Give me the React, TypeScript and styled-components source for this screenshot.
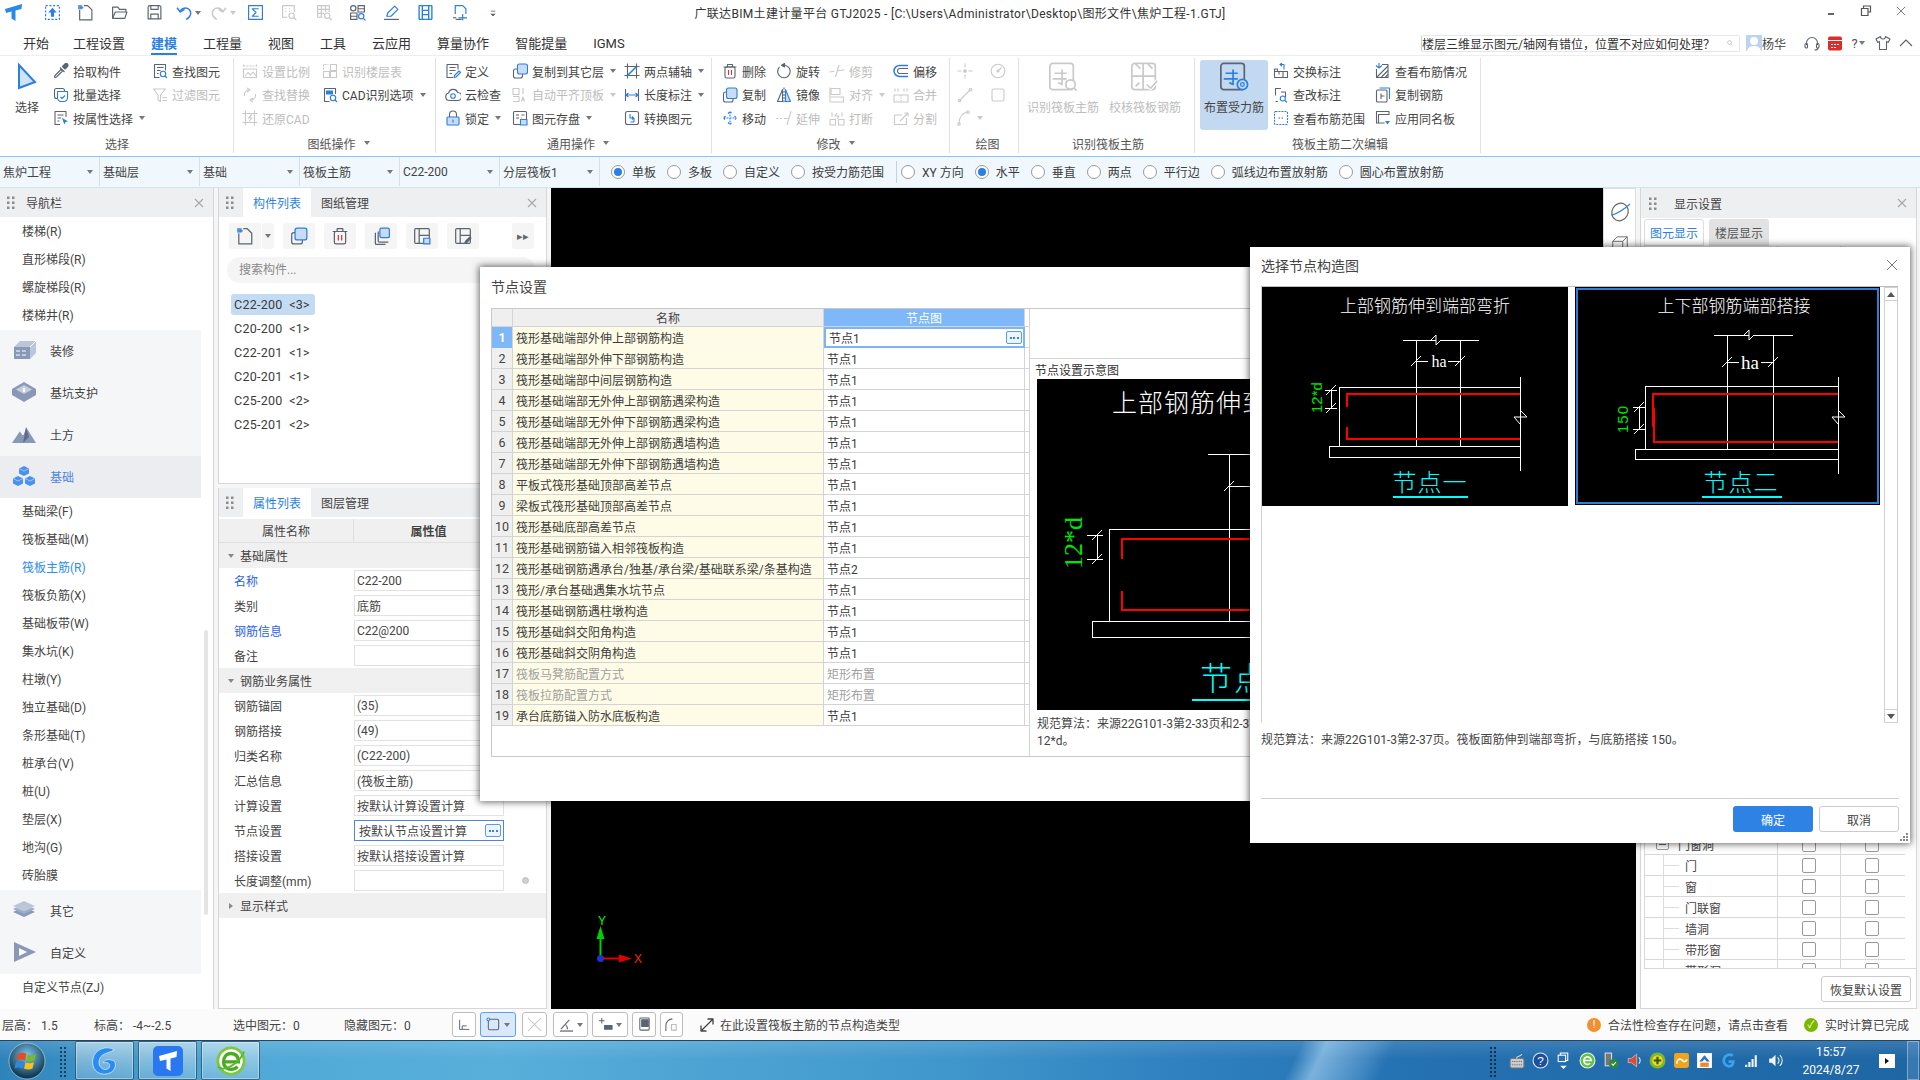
import React from "react";
import styled, { createGlobalStyle, css } from "styled-components";

const FONT = `Roboto, "Noto Sans CJK SC", "Noto Sans", sans-serif`;

const Global = createGlobalStyle`
  html, body { margin: 0; padding: 0; background: #fff; }
  body { font-family: ${FONT}; font-size: 12px; color: #3c3c3c; }
  * { box-sizing: border-box; }
  #root { width: 1920px; height: 1080px; }
`;

/* ---------- icons ---------- */
const IconBox = styled.svg<{ $dim?: boolean }>`
  flex: none;
  display: block;
  fill: none;
  stroke: currentColor;
  stroke-width: 1.1;
  stroke-linejoin: round;
  color: ${(p) => (p.$dim ? "#c9c9c9" : "#5b6470")};
  --a: ${(p) => (p.$dim ? "#c9c9c9" : "#2b7fe0")};
  --f: ${(p) => (p.$dim ? "#ececec" : "#c8dcf6")};
  --r: ${(p) => (p.$dim ? "#c9c9c9" : "#d8343a")};
`;
const A = { stroke: "var(--a)" };
const AF = { stroke: "var(--a)", fill: "var(--f)" };

const GLYPH: Record<string, React.ReactNode> = {
  pick: (<><path d="M2 14.5l-.5-.5.5-1.5L8 6.5l1.5 1.5-6 6z" /><path d="M7 4.5l4.5 4.5" /><path d="M9.5 3.5l2.5-2.5a1.4 1.4 0 012.5 2.5l-2.5 2.5z" fill="currentColor" /></>),
  batch: (<><rect x="1.5" y="1.5" width="10" height="10" rx="2" /><path {...A} fill="#fff" d="M4.5 4.5h10v6.5a3.5 3.5 0 01-3.5 3.5H8a3.5 3.5 0 01-3.5-3.5z" /><path {...A} d="M7.5 10l1.5 1.5 3-3" /></>),
  attr: (<><path d="M13 7V1.5H2v13h5" /><path d="M4.5 5h6M4.5 8h3.5M4.5 11h2" /><path fill="var(--a)" stroke="none" d="M9 8l6 3.3-2.5.7-1.2 2.5z" /></>),
  find: (<><path d="M13.5 7.5V1.5h-11v13h5" /><path d="M5 4.5h6.5M5 7.5h3.5M5 10.5h1.5" /><circle {...A} cx="11" cy="11" r="2.7" /><path {...A} d="M13 13l2 2" /></>),
  filter: (<><path d="M1.5 2h12L8.5 8v6.5L6 13V8z" /><path d="M10.5 10.5h4.5M10.5 13.5h4.5" /></>),
  scale: (<><path d="M1.5 1.5v3M14.5 1.5v3M1.5 3h13" strokeDasharray="2 1" /><rect x="1.5" y="6" width="13" height="8.5" /><path d="M3 13l3-3.5 2.5 2.5L11 9l3 4" /></>),
  floor: (<><path d="M1.5 8.5h6v6h-6zM8.5 8.5h6v6h-6zM8.5 1.5h6v6h-6z" /><path d="M1.5 6.5v-5h5" strokeDasharray="2 1" /></>),
  replace: (<><path d="M2.5 9a5.5 5.5 0 014-6.2M13.5 7a5.5 5.5 0 01-4 6.2" /><path d="M5 1l3 2-3 2M11 11l-3 2 3 2" /></>),
  restore: (<><path d="M0.5 3.5h15M0.5 12.5h15M3.5 .5v15M12.5 .5v15" /><path {...A} d="M10 4.5L6.5 8H10L7 11.5" /></>),
  cad: (<><path d="M13.5 7V1.5h-11v13h5" /><rect x="4" y="3.5" width="7" height="4" fill="var(--a)" stroke="none" /><circle {...A} cx="11" cy="11" r="2.7" /><path {...A} d="M13 13l2 2" /></>),
  define: (<><path d="M13 6.5V1.5H2v13h6" /><path d="M4.5 4.5h6M4.5 7.5h6M4.5 10.5h2.5" /><path {...A} d="M9 14.8l.5-2.3 4.5-4.5 1.5 1.5-4.5 4.5z" /></>),
  cloud: (<><path d="M4.5 13.5a3.8 3.8 0 01-.8-7.5 4.7 4.7 0 019-.5 3.9 3.9 0 01-.2 8z" /><circle {...A} cx="8" cy="9" r="2.3" /></>),
  lock: (<><rect {...AF} x="2" y="7" width="12" height="8" rx="1" /><path d="M4.5 7V4.5a3.5 3.5 0 017 0V7" /><path stroke="#2b7fe0" d="M8 9.5v3" /></>),
  copyto: (<><rect x="1.5" y="6" width="9" height="9" rx="2" /><rect {...AF} x="5.5" y="1" width="10" height="10" rx="2" /></>),
  alignTop: (<><path d="M1 1.5h6v6H1zM1 9.5h6v5H1" /><path d="M11 1l0 6M9.5 14.5L11 10l1.5 4.5M10 13h2" /></>),
  disk: (<><rect x="1.5" y="1.5" width="13" height="13" rx="1" /><path d="M4 5h3M4 8h3M9.5 5h3M9.5 8h.5" /><rect {...AF} x="8.5" y="9.5" width="6.5" height="5.5" /></>),
  twoPt: (<><path d="M3.5 .5v15M12.5 .5v15M.5 3.5h15M.5 12.5h15" /><path {...A} strokeWidth="1.6" d="M3.5 12.5l9-9" /></>),
  dimen: (<><path d="M1.5 2v12M14.5 2v12" /><path {...A} d="M2 8h12M4.5 6L2 8l2.5 2M11.5 6L14 8l-2.5 2" /></>),
  convert: (<><rect x="1.5" y="1.5" width="13" height="13" rx="2" /><path {...A} d="M6 4v4H9.5M8 6.5L9.5 8 8 9.5M10 12V8M10 12H6.5" /></>),
  trash: (<><path d="M1.5 4h13M5.5 4V1.5h5V4" /><rect x="3" y="4" width="10" height="11" rx="1.5" /><path stroke="var(--r)" d="M6.5 7v5M9.5 7v5" /></>),
  rotate: (<><path d="M9 2.2a6.3 6.3 0 11-5.5 1.7" /><path d="M8.5 .5v3.5L5.5 2.2z" fill="currentColor" /></>),
  trim: (<><path d="M.5 9l5-.7M9 7.8l6.5-1M10 2L6.5 14" /></>),
  offset: (<><path {...A} strokeWidth="1.5" d="M15 2.5H6.5a5.5 5.5 0 000 11H15" /><path d="M15 5.5H7a2.5 2.5 0 000 5h8" /></>),
  copyFill: (<><rect x="1.5" y="5" width="9.5" height="10" rx="2" /><rect {...AF} x="4.5" y="1" width="10.5" height="10.5" rx="2" /></>),
  mirror: (<><path d="M6.5 2.5L1.5 14.5h5z" /><path {...A} fill="var(--f)" d="M9.5 2.5l5 12h-5z" /><path d="M8 .5v15" strokeDasharray="2 1.2" /></>),
  align: (<><path d="M2 1.5h9v6H2zM2 10h12.5v5H2" /><path d="M1 .5v15" /></>),
  merge: (<><path d="M2 1.5v3M5 1.5v3M11 1.5v3M14 1.5v3" /><rect x="1" y="8" width="14" height="7" /><path d="M8 8v7" strokeDasharray="1.5 1" /></>),
  move: (<><path {...A} d="M8 1.5v13M1.5 8h13M6 3.5l2-2 2 2M6 12.5l2 2 2-2M3.5 6l-2 2 2 2M12.5 6l2 2-2 2" strokeDasharray="2 1" /></>),
  extend: (<><path d="M.5 8.5h2M4 8.5h2M8 8.5h4M15 1L11 15" /></>),
  breakIt: (<><rect x="1" y="9.5" width="5.5" height="5.5" /><rect x="9.5" y="9.5" width="5.5" height="5.5" /><path d="M3 2.5v4M13 2.5v4M8 3l-2 3h4L8 9" /></>),
  split: (<><path d="M13.5 8v6.5h-12V5H9" /><path d="M7 11l7.5-7.5M11.5 3h3.5v3.5" /></>),
  point: (<><path d="M8 .5v4M8 11.5v4M.5 8h4M11.5 8h4" /><circle cx="8" cy="8" r="1.3" fill="currentColor" /></>),
  gauge: (<><circle cx="8" cy="8" r="6.8" /><path d="M8 8l3.5-3.5" /><circle cx="8" cy="8" r="1" fill="currentColor" /></>),
  line: (<><path d="M2.5 13.5l11-11" /><circle cx="2.5" cy="13.5" r="1.3" /><circle cx="13.5" cy="2.5" r="1.3" /></>),
  rect: (<><rect x="2" y="2" width="12" height="12" rx="1.8" /></>),
  arc: (<><path d="M2 14C2 7 5 3 11 2" /><circle cx="2" cy="14" r="1.3" /><circle cx="11" cy="2" r="1.3" /></>),
  swap: (<><path d="M1.5 8.5h13v6h-13zM1.5 8.5V6h3v2.5M6 8.5V11.5M10 8.5v6" /><path {...A} d="M11 6.5V1.5H7.5M9 0l-2 1.5L9 3" /></>),
  edit: (<><path d="M8 1.5H2.5v7M2.5 14.5H5" /><path d="M8 5h4.5v5" /><circle {...A} cx="9.8" cy="11.5" r="2.5" /><path {...A} d="M12 13.5l2 2" /></>),
  range: (<><rect {...A} x="1.5" y="1.5" width="13" height="13" rx="1" strokeDasharray="2 1" /><path d="M5.5 8h5" strokeDasharray="1.5 1.5" /></>),
  hatch: (<><path d="M1.5 6v8.5H13V1.5H7" /><path d="M2 14l11-11M6 14.5l7-7M10 14.5l3-3" /><path {...A} d="M4 0v5M1 2.5l3 2.5 3-2.5" /></>),
  copyBar: (<><rect x="1.5" y="3" width="10.5" height="12" rx="1" /><path d="M6 9h3.5M6 9V6.5M6 9v3" /><path {...A} d="M4.5 1h10v11" /></>),
  sameName: (<><path d="M1.5 13V1.5H14V4.5H3.5v8.5zM1.5 13h8" /><path fill="var(--a)" stroke="none" d="M10 11h5l-2.5 3.5z" /></>),
  newDoc: (<><path d="M3 3.5h3M2.5 5.5V15h11.5V5.5L10 1.5H6.5" /><rect x="1" y="1" width="4" height="4" fill="var(--a)" stroke="none" opacity=".8" /></>),
  copyStack: (<><path d="M3 5v9.5a1 1 0 001 1h8" /><path d="M5.5 4v8.5a1 1 0 001 1h8" /><rect {...AF} x="7" y="1" width="8.5" height="8.5" rx="1.5" /></>),
  saveList: (<><rect x="1.5" y="1.5" width="13" height="13" rx="1" /><path d="M5.5 1.5v6h9M5.5 7.5v7" /><rect {...AF} x="9.5" y="10" width="5.5" height="5" /></>),
  editList: (<><rect x="1.5" y="1.5" width="13" height="13" rx="1" /><path d="M5.5 1.5v6h9M5.5 7.5v7" /><path d="M9.5 14.5l1-2 3.5-3.5 1 1-3.5 3.5z" fill="currentColor" /></>),
  upload: (<><rect {...A} x="1.5" y="1.5" width="13" height="13" strokeDasharray="2 1.5" /><path fill="var(--a)" stroke="none" d="M8 3.5l4 4.5H9.5v4h-3V8H4z" /></>),
  folder: (<><path d="M1.5 13.5V3h5l1.5 2H14v2.5" /><path d="M1.5 13.5l2.5-6H15l-2 6z" /></>),
  save: (<><path d="M2 14V3a1.5 1.5 0 011.5-1.5h9A1.5 1.5 0 0114 3v11z" /><path d="M4.5 14V9.5h7V14M4.5 1.5v3.5h7V1.5" /></>),
  undo: (<><path {...A} strokeWidth="1.4" d="M4 7.5a5 5 0 119 4c-1 1.5-2 2.5-3.5 3" /><path {...A} strokeWidth="1.4" d="M1 3.5l3 4 4-2.5" /></>),
  redo: (<><path strokeWidth="1.4" d="M12 7.5a5 5 0 10-9 4c1 1.5 2 2.5 3.5 3" /><path strokeWidth="1.4" d="M15 3.5l-3 4-4-2.5" /></>),
  sigma: (<><rect {...A} x="1.5" y="1.5" width="13" height="13" /><path {...A} d="M11 4.5H5L8.5 8 5 11.5h6" /></>),
  lister: (<><path d="M12.5 8V1.5h-11v11H6" /><path d="M4 4.5h2M7.5 4.5h2M4 7h2M7.5 7h2" strokeDasharray="1 1" /><circle cx="10" cy="11" r="2.5" /><path d="M12 13l2.5 2" /></>),
  gridFind: (<><path d="M1.5 1.5h11v6M1.5 1.5v11H6M1.5 5h11M1.5 8.8h6M5 1.5v11M8.8 1.5v6" /><circle cx="10.5" cy="11" r="2.5" /><path d="M12.5 13l2.5 2" /></>),
  qSum: (<><circle cx="4" cy="4" r="2.5" /><path d="M8.5 1.5h6v6h-6zM8.5 4.5h6M1.5 8.5h6v6h-6zM1.5 11.5h6" /><circle {...A} cx="11.5" cy="11.5" r="2.5" /><path {...A} d="M13.5 13.5l2 2" /></>),
  pen: (<><path d="M1 14.5h14" /><path {...A} d="M3.5 11.5l1-3L11 2l3 3-6.5 6.5z" /></>),
  film: (<><path {...A} strokeWidth="1.3" d="M2 1.5v13M14 1.5v13M5 1.5v13M11 1.5v13M2 1.5h12M2 14.5h12M5 6h6M5 10h6" /></>),
  docPlus: (<><path {...A} d="M4 9.5V1.5h7l3 3v5" /><path d="M10 14.5H4.5" /><path {...A} d="M7 13h8M11 9.5v6" /><path d="M2 13h3" /></>),
  more: (<><path d="M5 5.5h6" /><path d="M5 9l3 3 3-3" fill="currentColor" /></>),
  chevUp: (<path d="M2 11l6-6 6 6" />),
  close: (<path d="M2.5 2.5l11 11M13.5 2.5l-11 11" />),
  headset: (<><path d="M2.5 10V8a5.5 5.5 0 0111 0v2" /><rect x="1" y="8.5" width="2.5" height="4.5" rx="1" /><rect x="12.5" y="8.5" width="2.5" height="4.5" rx="1" /><path d="M14 13c0 1.5-2 2-3.5 2" /></>),
  shirt: (<path d="M5.5 1.5L1 4l1.8 3.5L4.5 6.5v8h7v-8l1.7 1L15 4l-4.5-2.5a2.5 2.5 0 01-5 0z" />),
  corner: (<path d="M3 2v11h11M6 9h5M6 9v4" />),
  cornerSel: (<><rect x="2.5" y="2.5" width="11" height="11" rx="1.5" /><circle {...A} fill="#fff" cx="2.5" cy="2.5" r="1.5" /></>),
  cross: (<path d="M1 1l14 14M15 1L1 15" />),
  angle: (<><path d="M2 13L11 3" /><path d="M1 15h14" strokeWidth="2" stroke="#999" /><path d="M9 13a7 7 0 00-2-5" /></>),
  plusBar: (<><path d="M4 1v6M1 4h6" /><rect x="7" y="9" width="8" height="4" fill="currentColor" /></>),
  phone: (<><rect x="3" y="1" width="10" height="13" rx="1" /><rect x="5" y="3" width="7" height="7" fill="currentColor" /></>),
  curve: (<><path d="M2 15V9a7 7 0 017-7" /><rect x="8" y="8" width="5" height="6" stroke="#bbb" /></>),
  expand: (<><path strokeWidth="1.3" stroke="#444" d="M2 14L14 2M8.5 2H14v5.5M2 8.5V14h5.5" /></>),
};

const Icon = ({ n, s = 16, dim, w, h }: { n: string; s?: number; dim?: boolean; w?: number; h?: number }) => (
  <IconBox viewBox="0 0 16 16" width={w ?? s} height={h ?? s} $dim={dim}>
    {GLYPH[n]}
  </IconBox>
);

const Caret = styled.i<{ $dim?: boolean; $ml?: number }>`
  display: inline-block;
  flex: none;
  width: 0;
  height: 0;
  margin-left: ${(p) => p.$ml ?? 5}px;
  border-left: 3px solid transparent;
  border-right: 3px solid transparent;
  border-top: 4px solid ${(p) => (p.$dim ? "#c9c9c9" : "#777")};
`;

const Cross = styled(({ className }: { className?: string }) => (
  <svg className={className} viewBox="0 0 10 10" width="10" height="10">
    <path d="M1 1l8 8M9 1L1 9" stroke="#a8a8a8" strokeWidth="1.1" fill="none" />
  </svg>
))`
  flex: none;
`;

const GripDots = ({ h = 13 }: { h?: number }) => (
  <svg viewBox="0 0 8 13" width="8" height={h}>
    {[1.5, 6.5, 11.5].map((y) => (
      <g key={y}>
        <rect x="0" y={y - 1} width="2.5" height="2.5" fill="#8c8c8c" />
        <rect x="5" y={y - 1} width="2.5" height="2.5" fill="#8c8c8c" />
      </g>
    ))}
  </svg>
);

/* ---------- layout: page ---------- */
const Page = styled.div`
  position: relative;
  width: 1920px;
  height: 1080px;
  overflow: hidden;
  display: flex;
  flex-direction: column;
  background: #fff;
`;

const TitleRow = styled.div`
  height: 31px;
  flex: none;
  display: grid;
  grid-template-columns: 1fr auto 1fr;
  align-items: center;
  padding-bottom: 6px;
`;
const Quick = styled.div`
  display: flex;
  align-items: center;
  padding-left: 4px;
`;
const QuickSlot = styled.span<{ $ml: number; $w?: number }>`
  flex: none;
  width: ${(p) => p.$w ?? 20}px;
  margin-left: ${(p) => p.$ml}px;
  display: flex;
  align-items: center;
  justify-content: center;
`;
const AppTitle = styled.div`
  font-size: 12px;
  color: #333;
  white-space: nowrap;
  letter-spacing: 0.33px;
`;
const WinControls = styled.div`
  display: flex;
  justify-content: flex-end;
  align-items: center;
  gap: 23px;
  padding-right: 13px;
  margin-top: -3px;
`;
const WinBtn = styled.span`
  width: 12px;
  display: flex;
  justify-content: center;
  color: #555;
`;
const Minimize = styled.i`
  width: 6px;
  height: 2px;
  background: #666;
  margin-top: 6px;
`;

const MenuRow = styled.div`
  height: 24px;
  flex: none;
  display: flex;
  align-items: stretch;
  padding-left: 8px;
  padding-right: 6px;
`;
const MenuTab = styled.div<{ $on?: boolean }>`
  padding: 0 13px;
  font-size: 13px;
  line-height: 26px;
  color: #333;
  white-space: nowrap;
  &:first-child {
    margin-left: 2px;
    margin-right: -2px;
  }
  ${(p) =>
    p.$on &&
    css`
      color: #2b7fe0;
      font-weight: 700;
      box-shadow: inset 0 -2px 0 #2b7fe0;
      padding: 0;
      margin: 0 13px;
    `}
`;
const MenuRight = styled.div`
  margin-left: auto;
  display: flex;
  align-items: center;
`;
const HelpSearch = styled.div`
  width: 319px;
  height: 17px;
  border: 1px solid #e4e8ee;
  border-left-color: #ccc;
  border-radius: 2px;
  background: #fff;
  display: flex;
  align-items: center;
  justify-content: flex-end;
  padding-right: 6px;
  overflow: hidden;
  white-space: nowrap;
  font-size: 12px;
  color: #333;
  gap: 12px;
`;
const Avatar = styled.span`
  margin-left: 6px;
  width: 16px;
  height: 16px;
  background: #bcd4f2;
  display: flex;
  justify-content: center;
  align-items: flex-end;
`;
const UserName = styled.span`
  width: 42px;
  font-size: 12px;
  color: #444;
`;
const TopTool = styled.span<{ $ml?: number; $w?: number }>`
  display: flex;
  align-items: center;
  justify-content: center;
  width: ${(p) => p.$w ?? 16}px;
  margin-left: ${(p) => p.$ml ?? 0}px;
  color: #555;
  font-size: 13px;
`;

/* ---------- ribbon ---------- */
const Ribbon = styled.div`
  height: 101px;
  flex: none;
  display: flex;
  align-items: stretch;
  border-top: 1px solid #eee;
`;
const Group = styled.div<{ $w: number; $pl: number }>`
  flex: none;
  width: ${(p) => p.$w}px;
  display: flex;
  flex-direction: column;
  margin: 2px 0 3px;
  border-right: 1px solid #e2e2e2;
  padding-left: ${(p) => p.$pl}px;
`;
const GroupBody = styled.div`
  flex: 1;
  display: flex;
  padding-top: 1.5px;
`;
const GroupLabel = styled.div`
  height: 20px;
  display: flex;
  align-items: center;
  justify-content: center;
  font-size: 12px;
  color: #555;
  white-space: nowrap;
`;
const Col = styled.div<{ $w?: number; $pl?: number }>`
  flex: none;
  width: ${(p) => (p.$w ? `${p.$w}px` : "auto")};
  padding-left: ${(p) => p.$pl ?? 0}px;
  display: flex;
  flex-direction: column;
`;
const RItem = styled.div<{ $dim?: boolean }>`
  height: 23.6px;
  display: flex;
  align-items: center;
  gap: 4px;
  font-size: 12px;
  white-space: nowrap;
  color: ${(p) => (p.$dim ? "#bdbdbd" : "#444")};
`;
const BigBtn = styled.div<{ $w: number; $on?: boolean; $dim?: boolean }>`
  flex: none;
  width: ${(p) => p.$w}px;
  height: 70px;
  border-radius: 3px;
  padding-top: 2px;
  display: flex;
  flex-direction: column;
  align-items: center;
  font-size: 12px;
  white-space: nowrap;
  color: ${(p) => (p.$dim ? "#bdbdbd" : "#444")};
  background: ${(p) => (p.$on ? "#c3d9f1" : "transparent")};
`;
const BigIconWrap = styled.span`
  height: 31px;
  display: flex;
  align-items: center;
`;
const BigLabel = styled.span`
  margin-top: 7px;
  line-height: 16px;
`;

const Item = ({ n, t, dim, caret }: { n: string; t: string; dim?: boolean; caret?: boolean }) => (
  <RItem $dim={dim}>
    <Icon n={n} dim={dim} />
    <span>{t}</span>
    {caret && <Caret $dim={dim} $ml={2} />}
  </RItem>
);

const BigGlyph = ({ kind, dim }: { kind: "scan" | "check" | "place"; dim?: boolean }) => (
  <IconBox viewBox="0 0 32 32" width="30" height="30" $dim={dim}>
    <rect x="2" y="1.5" width="25" height="28" rx="3" strokeWidth="1.8" />
    {kind === "check" ? (
      <>
        <path d="M2 15h25M14 2v28M6 2l5 5M19 2l5 5M6 26l4-4" strokeWidth="1.8" />
        <path d="M18 24l4 4 7-8" stroke="#fff" strokeWidth="4" />
        <path d="M18 24l4 4 7-8" strokeWidth="1.8" />
      </>
    ) : (
      <>
        <path {...A} strokeWidth="1.8" d="M7 12h13M5 18h15M15 8v16l-4-2" />
        {kind === "scan" ? (
          <>
            <circle cx="24" cy="24" r="5" fill="#fff" strokeWidth="1.8" />
            <path d="M27.5 27.5l3 3" strokeWidth="1.8" />
          </>
        ) : (
          <>
            <circle {...A} cx="25" cy="24" r="5.5" fill="#c3d9f1" strokeWidth="1.8" />
            <circle {...A} cx="25" cy="24" r="2" strokeWidth="1.3" />
          </>
        )}
      </>
    )}
  </IconBox>
);

/* ---------- property bar ---------- */
const PropBar = styled.div`
  height: 32px;
  flex: none;
  display: flex;
  align-items: center;
  background: #f0f8fd;
  border-top: 1px solid #8ec4f0;
  border-bottom: 1px solid #cfe4f4;
  padding-bottom: 1px;
`;
const Drop = styled.div`
  width: 100px;
  height: 100%;
  flex: none;
  border-right: 1px solid #d8e0e6;
  display: flex;
  align-items: center;
  padding: 0 6px 0 3px;
  justify-content: space-between;
  font-size: 12px;
  color: #444;
`;
const RadioRow = styled.div<{ $ml: number }>`
  display: flex;
  align-items: center;
  margin-left: ${(p) => p.$ml}px;
  height: 100%;
`;
const RadioItem = styled.div`
  display: flex;
  align-items: center;
  gap: 7px;
  margin-right: 11px;
  font-size: 12px;
  color: #3c3c3c;
  white-space: nowrap;
`;
const RadioMark = styled.i<{ $on?: boolean }>`
  flex: none;
  width: 14px;
  height: 14px;
  border-radius: 50%;
  border: 1px solid #999;
  background: #fff;
  display: flex;
  align-items: center;
  justify-content: center;
  &::after {
    content: "";
    width: 8px;
    height: 8px;
    border-radius: 50%;
    background: ${(p) => (p.$on ? "#2b7fe0" : "transparent")};
  }
`;
const BarDivider = styled.i`
  width: 1px;
  height: 22px;
  background: #c4d2dd;
  margin: 0 4px 0 1px;
`;

/* ---------- main ---------- */
const Main = styled.div`
  flex: 1;
  min-height: 0;
  display: flex;
  background: #f6f6f6;
`;

const PanelHead = styled.div`
  height: 29px;
  flex: none;
  display: flex;
  align-items: center;
  background: #eeeff1;
  font-size: 12px;
  color: #444;
`;

const Nav = styled.div`
  width: 214px;
  flex: none;
  display: flex;
  flex-direction: column;
  background: #fff;
  border-right: 1px solid #d6d6d6;
  position: relative;
`;
const NavHead = styled(PanelHead)`
  padding: 0 9px 0 7px;
  gap: 11px;
  justify-content: flex-start;
  & > svg:last-child {
    margin-left: auto;
  }
`;
const NavLeaf = styled.div<{ $on?: boolean }>`
  height: 28px;
  line-height: 28px;
  padding-left: 22px;
  font-size: 12px;
  color: ${(p) => (p.$on ? "#2b8ef0" : "#444")};
  white-space: nowrap;
`;
const NavCat = styled.div<{ $on?: boolean }>`
  height: 42px;
  width: 201px;
  display: flex;
  align-items: center;
  gap: 14px;
  padding: 0 0 2px 12px;
  font-size: 12px;
  color: ${(p) => (p.$on ? "#4a86e0" : "#444")};
  background: ${(p) => (p.$on ? "#ecedf0" : "#f5f6f8")};
`;
const NavThumb = styled.i`
  position: absolute;
  left: 204px;
  top: 442px;
  width: 4px;
  height: 285px;
  border-radius: 2px;
  background: #e4e4e4;
`;
const NavTop = styled.div`
  height: 1px;
  flex: none;
`;

const Mid = styled.div`
  width: 329px;
  flex: none;
  margin: 0 4px;
  display: flex;
  flex-direction: column;
  gap: 4px;
`;
const MidPane = styled.div<{ $h?: number }>`
  flex: ${(p) => (p.$h ? `none` : "1")};
  height: ${(p) => (p.$h ? `${p.$h}px` : "auto")};
  min-height: 0;
  background: #fff;
  border: 1px solid #d6d6d6;
  border-top: 0;
  display: flex;
  flex-direction: column;
`;
const MidHead = styled(PanelHead)`
  padding: 0 9px 0 7px;
  & > svg:last-child {
    margin-left: auto;
  }
`;
const MidGrip = styled.span`
  width: 17px;
  display: flex;
`;
const HeadTab = styled.div<{ $on?: boolean }>`
  width: 68px;
  height: 100%;
  display: flex;
  align-items: center;
  justify-content: center;
  color: ${(p) => (p.$on ? "#2b7fe0" : "#444")};
  background: ${(p) => (p.$on ? "#fff" : "transparent")};
`;
const ListTools = styled.div`
  display: flex;
  gap: 9px;
  padding: 6px 12px 0 10px;
  height: 33px;
  flex: none;
`;
const ToolSquare = styled.div<{ $w?: number }>`
  width: ${(p) => p.$w ?? 32}px;
  height: 26px;
  border-radius: 3px;
  background: #f5f5f5;
  display: flex;
  align-items: center;
  justify-content: center;
  font-size: 11px;
  color: #666;
`;
const SplitTool = styled.div`
  display: flex;
  gap: 1px;
`;
const ToolPush = styled(ToolSquare)`
  margin-left: auto;
`;
const SearchPill = styled.div`
  margin: 7px 11px 0 8px;
  height: 26px;
  flex: none;
  border-radius: 13px;
  background: #f5f5f5;
  padding-left: 12px;
  line-height: 26px;
  font-size: 12px;
  color: #888;
`;
const PartList = styled.div`
  padding: 11px 0 0 12px;
  display: flex;
  flex-direction: column;
  gap: 3px;
`;
const PartRow = styled.div<{ $on?: boolean }>`
  width: 84px;
  height: 21px;
  line-height: 21px;
  padding-left: 3px;
  border-radius: 3px;
  font-size: 12.5px;
  letter-spacing: 0.25px;
  white-space: pre;
  color: #3c3c3c;
  background: ${(p) => (p.$on ? "#c3dbf3" : "transparent")};
`;

const AttrHead = styled.div`
  margin-top: 2px;
  height: 24px;
  flex: none;
  display: grid;
  grid-template-columns: 134px 150px 1fr;
  background: #f0f0f0;
  border-bottom: 1px solid #e0e0e0;
`;
const AttrHeadCell = styled.div<{ $b?: boolean }>`
  display: flex;
  align-items: center;
  justify-content: center;
  font-size: 12px;
  color: #444;
  font-weight: ${(p) => (p.$b ? 700 : 400)};
  & + & {
    border-left: 1px solid #e0e0e0;
  }
`;
const AttrGroup = styled.div`
  height: 25px;
  flex: none;
  display: flex;
  align-items: center;
  background: #f0f0f0;
  font-size: 12px;
  color: #444;
  padding-left: 9px;
  gap: 6px;
`;
const Tri = styled.i<{ $open?: boolean }>`
  width: 0;
  height: 0;
  ${(p) =>
    p.$open
      ? css`
          border-left: 3px solid transparent;
          border-right: 3px solid transparent;
          border-top: 4px solid #888;
        `
      : css`
          border-top: 3px solid transparent;
          border-bottom: 3px solid transparent;
          border-left: 4px solid #888;
          margin: 0 1px;
        `}
`;
const AttrRow = styled.div`
  height: 25px;
  flex: none;
  display: grid;
  grid-template-columns: 135px 150px 1fr;
  align-items: center;
`;
const AttrName = styled.div<{ $link?: boolean }>`
  padding-left: 15px;
  font-size: 12px;
  color: ${(p) => (p.$link ? "#2b62e8" : "#444")};
`;
const AttrValue = styled.div<{ $focus?: boolean }>`
  height: 21px;
  display: flex;
  align-items: center;
  justify-content: space-between;
  padding: 0 2px 0 ${(p) => (p.$focus ? 4 : 2)}px;
  border: 1px solid ${(p) => (p.$focus ? "#4f86d8" : "#e2e2e2")};
  font-size: 12px;
  color: #444;
  white-space: nowrap;
`;
const DotsBtn = styled.span`
  flex: none;
  width: 16px;
  height: 13px;
  border: 1px solid #5a9ae8;
  border-radius: 2px;
  background: #eef4fc;
  display: flex;
  align-items: center;
  justify-content: center;
  gap: 1.5px;
  & > i {
    width: 2px;
    height: 2px;
    background: #3a80d8;
  }
`;
const AttrDot = styled.i`
  width: 7px;
  height: 7px;
  border-radius: 50%;
  background: #d0d0d0;
  border: 1px solid #c0c0c0;
  margin-left: 18px;
`;

const Canvas = styled.div`
  flex: 1;
  background: #000;
  position: relative;
`;
const FloatTools = styled.div`
  position: absolute;
  top: 0;
  right: 0;
  width: 33px;
  height: 120px;
  background: #fff;
  border: 1px solid #ddd;
  display: flex;
  flex-direction: column;
  align-items: center;
  gap: 11px;
  padding-top: 12px;
`;
const AxisMark = styled.svg`
  position: absolute;
  left: 40px;
  top: 722px;
`;

const SidePanel = styled.div`
  width: 277px;
  flex: none;
  margin: 0 3px 0 4px;
  background: #fff;
  border: 1px solid #d6d6d6;
  border-top: 0;
  display: flex;
  flex-direction: column;
`;
const SideHead = styled(PanelHead)`
  height: 30px;
  padding: 0 9px 0 8px;
  gap: 17px;
  & > svg:last-child {
    margin-left: auto;
  }
`;
const SideTabs = styled.div`
  display: flex;
  gap: 5px;
  padding: 1px 0 0 3px;
  height: 28px;
  flex: none;
`;
const SideTab = styled.div<{ $on?: boolean }>`
  width: 60px;
  display: flex;
  align-items: center;
  justify-content: center;
  font-size: 12px;
  border-radius: 3px 3px 0 0;
  color: ${(p) => (p.$on ? "#2b7fe0" : "#555")};
  background: ${(p) => (p.$on ? "#fff" : "#e2e2e2")};
  border: ${(p) => (p.$on ? "1px solid #ddd" : "0")};
`;
const LayerTable = styled.div`
  height: 723px;
  flex: none;
  margin-left: 3px;
  overflow: hidden;
  border-bottom: 1px solid #d8d8d8;
`;
const LayerRow = styled.div`
  height: 21px;
  width: 261px;
  display: grid;
  grid-template-columns: 132px 63px 63px;
  border-bottom: 1px solid #d8d8d8;
  border-left: 1px solid #d8d8d8;
`;
const LayerName = styled.div<{ $top?: boolean }>`
  position: relative;
  font-size: 12px;
  color: #444;
  display: flex;
  align-items: center;
  padding-left: ${(p) => (p.$top ? 33 : 40)}px;
  ${(p) =>
    !p.$top &&
    css`
      &::before {
        content: "";
        position: absolute;
        left: 18px;
        top: 0;
        bottom: 0;
        width: 1px;
        background: #ddd;
      }
      &::after {
        content: "";
        position: absolute;
        left: 18px;
        top: 10px;
        width: 16px;
        height: 1px;
        background: #ddd;
      }
    `}
`;
const FoldBox = styled.i`
  position: absolute;
  left: 11px;
  top: 4px;
  width: 13px;
  height: 12px;
  border: 1px solid #999;
  border-radius: 2px;
  display: flex;
  align-items: center;
  justify-content: center;
  &::after {
    content: "";
    width: 7px;
    height: 1px;
    background: #666;
  }
`;
const LayerCell = styled.div`
  border-left: 1px solid #d8d8d8;
  display: flex;
  align-items: center;
  justify-content: center;
  font-size: 12px;
  white-space: nowrap;
`;
const Check = styled.i`
  width: 14px;
  height: 15px;
  border: 1px solid #999;
  border-radius: 2px;
  background: #fff;
`;
const SideFoot = styled.div`
  flex: 1;
  display: flex;
  justify-content: flex-end;
  padding: 7px 5px 0 0;
`;
const OutlineBtn = styled.div<{ $w: number }>`
  width: ${(p) => p.$w}px;
  height: 26px;
  border: 1px solid #ccc;
  border-radius: 3px;
  background: #fff;
  display: flex;
  align-items: center;
  justify-content: center;
  font-size: 12px;
  color: #444;
`;

/* ---------- status & taskbar ---------- */
const Status = styled.div`
  height: 31px;
  flex: none;
  display: flex;
  align-items: center;
  background: #fbfbfb;
  font-size: 12px;
  color: #444;
  padding-right: 11px;
`;
const StatusText = styled.span<{ $w: number }>`
  flex: none;
  width: ${(p) => p.$w}px;
  padding-left: 2px;
  white-space: pre;
`;
const StatusBtn = styled.div<{ $w: number; $on?: boolean; $ml?: number }>`
  flex: none;
  width: ${(p) => p.$w}px;
  height: 25px;
  margin-left: ${(p) => p.$ml ?? 4}px;
  border-radius: 3px;
  border: 1px solid ${(p) => (p.$on ? "#5aa0ea" : "#bdbdbd")};
  background: ${(p) => (p.$on ? "#d9e8fa" : "#fff")};
  display: flex;
  align-items: center;
  justify-content: center;
  gap: 3px;
`;
const Hint = styled.span<{ $ml?: number }>`
  margin-left: ${(p) => p.$ml ?? 5}px;
  white-space: nowrap;
`;
const HintRight = styled.div`
  margin-left: auto;
  display: flex;
  align-items: center;
  gap: 7px;
  white-space: nowrap;
`;
const Badge = styled.i<{ $c: string; $ml?: number }>`
  flex: none;
  width: 14px;
  height: 14px;
  border-radius: 50%;
  background: ${(p) => p.$c};
  color: #fff;
  font-style: normal;
  font-size: 10px;
  line-height: 14px;
  text-align: center;
  margin-left: ${(p) => p.$ml ?? 0}px;
`;

const Taskbar = styled.div`
  height: 40px;
  flex: none;
  display: flex;
  align-items: stretch;
  border-top: 1px solid #24465f;
  background:
    linear-gradient(115deg, transparent 0 67.2%, rgba(190, 225, 250, 0.55) 68.5%, rgba(190, 225, 250, 0.18) 71%, transparent 72%),
    linear-gradient(180deg, rgba(255, 255, 255, 0.12), rgba(255, 255, 255, 0) 45%),
    linear-gradient(90deg, #2f83bb 0, #4fa8d6 12%, #58afda 26%, #3f96cb 50%, #2e80bf 62%, #2470b0 75%, #1e66a4 100%);
`;
const Orb = styled.div`
  width: 53px;
  flex: none;
  display: flex;
  align-items: center;
  justify-content: center;
`;
const TaskGrip = styled.div`
  width: 22px;
  flex: none;
  display: flex;
  align-items: center;
  justify-content: center;
`;
const TaskBtns = styled.div`
  display: flex;
  gap: 4px;
`;
const TaskBtn = styled.div`
  width: 59px;
  display: flex;
  align-items: center;
  justify-content: center;
  border: 1px solid rgba(20, 60, 90, 0.7);
  border-radius: 2px;
  background: linear-gradient(180deg, rgba(255, 255, 255, 0.5), rgba(255, 255, 255, 0.18));
  box-shadow: inset 0 0 0 1px rgba(255, 255, 255, 0.35);
`;
const Tray = styled.div`
  margin-left: auto;
  display: flex;
  align-items: center;
`;
const TraySlot = styled.span`
  width: 23.5px;
  flex: none;
  display: flex;
  align-items: center;
  justify-content: center;
`;
const Clock = styled.div`
  width: 88px;
  margin-left: 0;
  flex: none;
  text-align: center;
  color: #fff;
  font-size: 12px;
  line-height: 18px;
`;
const DesktopBox = styled.span`
  flex: none;
  width: 16px;
  height: 14px;
  background: #fff;
  margin-left: 4px;
  display: flex;
  align-items: center;
  justify-content: center;
  &::after {
    content: "";
    border-top: 3px solid transparent;
    border-bottom: 3px solid transparent;
    border-left: 4px solid #111;
  }
`;
const ShowDesk = styled.span`
  flex: none;
  width: 12px;
  height: 100%;
  margin-left: 12px;
  margin-right: 1px;
  border: 1px solid rgba(255, 255, 255, 0.35);
  background: rgba(255, 255, 255, 0.12);
`;

/* ---------- dialogs ---------- */
const Dialog = styled.div<{ $l: number; $t: number; $w: number; $h: number }>`
  position: absolute;
  left: ${(p) => p.$l}px;
  top: ${(p) => p.$t}px;
  width: ${(p) => p.$w}px;
  height: ${(p) => p.$h}px;
  background: #fff;
  box-shadow: 0 0 7px 1px rgba(0, 0, 0, 0.6);
  display: flex;
  flex-direction: column;
`;
const DialogHead = styled.div<{ $h: number }>`
  height: ${(p) => p.$h}px;
  flex: none;
  display: flex;
  align-items: center;
  justify-content: space-between;
  padding: 0 12px 4px 11px;
  font-size: 14px;
  color: #444;
`;
const SetFrame = styled.div`
  margin-left: 11px;
  height: 449px;
  flex: none;
  display: flex;
  border-top: 1px solid #c8c8c8;
  border-left: 1px solid #c8c8c8;
  border-bottom: 1px solid #c8c8c8;
`;
const SetTableWrap = styled.div`
  width: 537px;
  flex: none;
`;
const SetRow = styled.div<{ $h: number }>`
  height: ${(p) => p.$h}px;
  display: grid;
  grid-template-columns: 21px 311px 201px;
  border-bottom: 1px solid #d4d4d4;
`;
const HeadCell = styled.div<{ $on?: boolean }>`
  border-right: 1px solid #d4d4d4;
  display: flex;
  align-items: center;
  justify-content: center;
  font-size: 12px;
  color: ${(p) => (p.$on ? "#fff" : "#444")};
  background: ${(p) => (p.$on ? "#7fb8f8" : "#efefef")};
`;
const IdxCell = styled.div<{ $on?: boolean }>`
  border-right: 1px solid #d4d4d4;
  display: flex;
  align-items: center;
  justify-content: center;
  font-size: 12.5px;
  color: ${(p) => (p.$on ? "#fff" : "#444")};
  font-weight: ${(p) => (p.$on ? 700 : 400)};
  background: ${(p) => (p.$on ? "#7fb8f8" : "#efefef")};
`;
const NameCell = styled.div<{ $dim?: boolean }>`
  border-right: 1px solid #d4d4d4;
  display: flex;
  align-items: center;
  padding-left: 3px;
  font-size: 12px;
  white-space: nowrap;
  color: ${(p) => (p.$dim ? "#a0a0a0" : "#3c3c3c")};
  background: #fefce6;
`;
const NodeCell = styled.div<{ $dim?: boolean; $on?: boolean }>`
  border-right: 1px solid #d4d4d4;
  display: flex;
  align-items: center;
  justify-content: space-between;
  padding: 0 1px 0 3px;
  font-size: 12px;
  color: ${(p) => (p.$dim ? "#a0a0a0" : "#3c3c3c")};
  ${(p) =>
    p.$on &&
    css`
      border: 2px solid #7ab5f5;
      padding: 0 1px 0 3px;
    `}
`;
const PreviewPane = styled.div`
  flex: 1;
  min-width: 0;
  padding-top: 49px;
  display: flex;
  flex-direction: column;
  border-left: 1px solid #d4d4d4;
`;
const PreviewCap = styled.div`
  height: 21px;
  flex: none;
  border-top: 1px solid #d4d4d4;
  padding-left: 5px;
  font-size: 12px;
  line-height: 24px;
  color: #333;
`;
const PreviewNote = styled.div`
  margin: 6px 0 0 7px;
  font-size: 12px;
  line-height: 17px;
  color: #444;
  white-space: nowrap;
  overflow: hidden;
`;
const Drawing = styled.svg`
  display: block;
  flex: none;
  background: #000;
`;
const PreviewDraw = styled(Drawing)`
  margin-left: 7px;
`;
const PickFrame = styled.div`
  margin: 0 12px 0 11px;
  height: 437px;
  flex: none;
  border-top: 1px solid #bdbdbd;
  border-left: 1px solid #d0d0d0;
  display: flex;
`;
const PickArea = styled.div`
  flex: 1;
  display: flex;
  align-items: flex-start;
  gap: 7px;
`;
const PickScroll = styled.div`
  width: 14px;
  flex: none;
  border: 1px solid #d0d0d0;
  display: flex;
  flex-direction: column;
  justify-content: space-between;
`;
const ScrollArrow = styled.div<{ $down?: boolean }>`
  height: 13px;
  display: flex;
  align-items: center;
  justify-content: center;
  ${(p) => (p.$down ? "border-top: 1px solid #d0d0d0;" : "border-bottom: 1px solid #d0d0d0;")}
  &::after {
    content: "";
    border-left: 4px solid transparent;
    border-right: 4px solid transparent;
    ${(p) => (p.$down ? "border-top: 5px solid #555;" : "border-bottom: 5px solid #555;")}
  }
`;
const Selected = styled.div`
  border: 3px solid #2f7fd8;
  outline: 1px solid #000;
  outline-offset: -1px;
  background: #000;
`;
const PickNote = styled.div`
  margin: 9px 0 0 11px;
  font-size: 12px;
  line-height: 17px;
  color: #444;
`;
const DialogFoot = styled.div`
  margin: auto 11px 0;
  height: 45px;
  flex: none;
  border-top: 1px solid #cfcfcf;
  padding-top: 7px;
  display: flex;
  justify-content: flex-end;
  gap: 6px;
`;
const PrimaryBtn = styled.div`
  width: 80px;
  height: 26px;
  border-radius: 3px;
  background: #2e82e4;
  color: #fff;
  font-size: 12px;
  display: flex;
  align-items: center;
  justify-content: center;
`;
const ResizeGrip = styled.svg`
  position: absolute;
  right: 2px;
  bottom: 2px;
`;

/* ---------- drawings ---------- */
const CAD = { font: `"Noto Sans CJK SC", sans-serif` };
const WL = ({ d, w = 1, c = "#fff" }: { d: string; w?: number; c?: string }) => (
  <path d={d} stroke={c} strokeWidth={w} fill="none" shapeRendering="crispEdges" />
);
const Ticks = ({ pts }: { pts: [number, number][] }) => (
  <path d={pts.map(([x, y]) => `M${x - 5} ${y + 5}l10 -10`).join("")} stroke="#fff" strokeWidth="1" fill="none" />
);
const BreakV = ({ x, y }: { x: number; y: number }) => (
  <path d={`M${x} ${y - 7}L${x + 7} ${y}L${x - 6} ${y}L${x} ${y + 7}`} stroke="#fff" strokeWidth="1" fill="none" />
);
const BreakH = ({ x, y }: { x: number; y: number }) => (
  <path d={`M${x - 5} ${y}L${x} ${y - 5}L${x} ${y + 5}L${x + 5} ${y}`} stroke="#fff" strokeWidth="1" fill="#000" />
);
const DT = ({ x, y, s, c = "#fff", anchor = "middle", ls = 0, t, font = CAD.font, rot }: any) => (
  <text
    x={x}
    y={y}
    fontSize={s}
    fill={c}
    textAnchor={anchor}
    letterSpacing={ls}
    fontFamily={font}
    fontWeight={300}
    transform={rot ? `rotate(-90 ${x} ${y})` : undefined}
  >
    {t}
  </text>
);

const ThumbOne = () => (
  <Drawing viewBox="1262 287 306 219" width="306" height="219">
    <DT x={1425} y={312} s={17} t="上部钢筋伸到端部弯折" />
    <WL d="M1403 340h76M1416 340v106M1460 340v106" />
    <BreakH x={1436} y={340} />
    <WL d="M1416 361h12M1448 361h12" />
    <Ticks pts={[[1416, 361], [1460, 361]]} />
    <DT x={1439} y={367} s={16} t="ha" font="Liberation Serif, serif" />
    <WL d="M1339 446V387H1520M1520 377V471M1329 446H1520M1329 446V457H1520" />
    <BreakV x={1520} y={417} />
    <WL d="M1347 407V394H1520M1347 427V439H1520" w={2} c="#ff0000" />
    <WL d="M1325 390h12M1325 408h12M1331 390v18" />
    <Ticks pts={[[1331, 390], [1331, 408]]} />
    <DT x={1322} y={413} s={15} c="#00e600" anchor="start" rot t="12*d" font="Liberation Sans, sans-serif" />
    <DT x={1430} y={491} s={24} c="#00ffff" ls={1} t="节点一" />
    <WL d="M1393 497h75" w={2} c="#00ffff" />
  </Drawing>
);
const ThumbTwo = () => (
  <Selected>
    <Drawing viewBox="1578 290 299 212" width="299" height="212">
      <DT x={1734} y={312} s={17} t="上下部钢筋端部搭接" />
      <WL d="M1714 335h79M1727 335v114M1773 335v114" />
      <BreakH x={1749} y={335} />
      <WL d="M1727 362h12M1761 362h12" />
      <Ticks pts={[[1727, 362], [1773, 362]]} />
      <DT x={1750} y={369} s={19} t="ha" font="Liberation Serif, serif" />
      <WL d="M1645 449V386H1838M1838 377V474M1635 449H1838M1635 449V459H1838" />
      <BreakV x={1838} y={417} />
      <WL d="M1653 427V394H1838M1654 408V442H1838" w={2} c="#ff0000" />
      <WL d="M1633 407h12M1633 429h12M1639 407v22" />
      <Ticks pts={[[1639, 407], [1639, 429]]} />
      <DT x={1628} y={433} s={15} c="#00e600" anchor="start" rot ls={1} t="150" font="Liberation Sans, sans-serif" />
      <DT x={1741} y={491} s={24} c="#00ffff" ls={1} t="节点二" />
      <WL d="M1702 497h80" w={2} c="#00ffff" />
    </Drawing>
  </Selected>
);
const PreviewArt = () => (
  <PreviewDraw viewBox="1037 379 243 331" width="243" height="331">
    <DT x={1112} y={412} s={25} anchor="start" ls={1} t="上部钢筋伸到端部弯折" />
    <WL d="M1208 454H1280M1229 454V621M1229 486H1280" />
    <Ticks pts={[[1229, 486]]} />
    <WL d="M1109 621V529H1280M1092 621H1280M1092 621V637H1280" />
    <WL d="M1122 559V539H1280M1122 591V610H1280" w={2} c="#ff0000" />
    <WL d="M1087 535h16M1087 559h16M1097 535v24" />
    <Ticks pts={[[1097, 535], [1097, 559]]} />
    <DT x={1082} y={569} s={26} c="#00e600" anchor="start" rot t="12*d" font="Liberation Serif, serif" />
    <DT x={1200} y={690} s={32} c="#00ffff" anchor="start" ls={2} t="节点一" />
    <WL d="M1192 700H1280" w={2} c="#00ffff" />
  </PreviewDraw>
);

/* ---------- data ---------- */
const SETTINGS: [string, string, boolean?][] = [
  ["筏形基础端部外伸上部钢筋构造", "节点1"],
  ["筏形基础端部外伸下部钢筋构造", "节点1"],
  ["筏形基础端部中间层钢筋构造", "节点1"],
  ["筏形基础端部无外伸上部钢筋遇梁构造", "节点1"],
  ["筏形基础端部无外伸下部钢筋遇梁构造", "节点1"],
  ["筏形基础端部无外伸上部钢筋遇墙构造", "节点1"],
  ["筏形基础端部无外伸下部钢筋遇墙构造", "节点1"],
  ["平板式筏形基础顶部高差节点", "节点1"],
  ["梁板式筏形基础顶部高差节点", "节点1"],
  ["筏形基础底部高差节点", "节点1"],
  ["筏形基础钢筋锚入相邻筏板构造", "节点1"],
  ["筏形基础钢筋遇承台/独基/承台梁/基础联系梁/条基构造", "节点2"],
  ["筏形/承台基础遇集水坑节点", "节点1"],
  ["筏形基础钢筋遇柱墩构造", "节点1"],
  ["筏形基础斜交阳角构造", "节点1"],
  ["筏形基础斜交阴角构造", "节点1"],
  ["筏板马凳筋配置方式", "矩形布置", true],
  ["筏板拉筋配置方式", "矩形布置", true],
  ["承台底筋锚入防水底板构造", "节点1"],
];

const NAV_A = ["楼梯(R)", "直形梯段(R)", "螺旋梯段(R)", "楼梯井(R)"];
const NAV_B = ["基础梁(F)", "筏板基础(M)", "筏板主筋(R)", "筏板负筋(X)", "基础板带(W)", "集水坑(K)", "柱墩(Y)", "独立基础(D)", "条形基础(T)", "桩承台(V)", "桩(U)", "垫层(X)", "地沟(G)", "砖胎膜"];
const PARTS = ["C22-200  <3>", "C20-200  <1>", "C22-201  <1>", "C20-201  <1>", "C25-200  <2>", "C25-201  <2>"];

const CatIcon = ({ k }: { k: string }) => {
  const g = "#8a98b8";
  const b = "#4a90ee";
  const art: Record<string, React.ReactNode> = {
    zx: (<><path d="M8 2h16v12L18 20H2V8z" fill="#bcc6da" /><path d="M2 8h16v12H2z" fill={g} /><path d="M4 12h4M10 12h4M4 16h4M10 16h4" stroke="#fff" /><path d="M18 8l6-6" stroke="#fff" /></>),
    jk: (<><path d="M12 1l12 7v6l-12 7L0 14V8z" fill={g} /><path d="M12 4l8 4.5-8 4.5-8-4.5z" fill="#c8d0e0" /><path d="M12 7v4" stroke="#fff" strokeWidth="2" /></>),
    tf: (<><path d="M0 20L8 8l3 4 3-8 10 16z" fill={g} /><path d="M8 8l3 4 3-8" fill="none" stroke="#fff" /><path d="M14 4l3 10-6 6" fill="#5e6c8c" /></>),
    jc: (<><path d="M12 1l5 2.5v5L12 11 7 8.5v-5z" fill={b} /><path d="M6 11l5 2.5v5L6 21l-5-2.5v-5z" fill={b} /><path d="M18 11l5 2.5v5L18 21l-5-2.5v-5z" fill={b} /><path d="M7 3.5l5 2.5 5-2.5M1 13.5l5 2.5 5-2.5M13 13.5l5 2.5 5-2.5" stroke="#9cc4f6" fill="none" /></>),
    qt: (<><path d="M12 2l11 5-11 5L1 7z" fill="#bcc6da" /><path d="M1 13l11 5 11-5-4-2-7 3-7-3z" fill={g} /><path d="M1 10l11 5 11-5-3-1.5-8 3.5-8-3.5z" fill="#a0acc6" /></>),
    zd: (<><path d="M2 1l22 10L2 21z" fill={g} /><path d="M7 7v8l8-4z" fill="#fff" /></>),
  };
  return <svg viewBox="0 0 24 22" width="24" height="22">{art[k]}</svg>;
};

const LAYER_HIDDEN = ["施工段","轴线","轴网","辅助轴线","柱","框柱","暗柱","端柱","构造柱","墙","剪力墙","人防门框墙","砌体墙","砌体加筋","保温墙","暗梁","墙垛","幕墙","梁","连梁","圈梁","板","现浇板","螺旋板","柱帽","板洞","板受力筋"];
const LAYER_SHOWN = ["门","窗","门联窗","墙洞","带形窗","带形洞"];

const Quicks: { n?: string; ml: number; w?: number; caret?: boolean; dim?: boolean; s?: number }[] = [
  { n: "upload", ml: 18 },
  { n: "newDoc", ml: 13 },
  { n: "folder", ml: 14 },
  { n: "save", ml: 15 },
  { n: "undo", ml: 10 },
  { caret: true, ml: 1, w: 6 },
  { n: "redo", ml: 7, dim: true },
  { caret: true, ml: 2, w: 6, dim: true },
  { n: "sigma", ml: 9 },
  { n: "lister", ml: 14, dim: true },
  { n: "gridFind", ml: 15, dim: true },
  { n: "qSum", ml: 13 },
  { n: "pen", ml: 14 },
  { n: "film", ml: 14 },
  { n: "docPlus", ml: 14 },
  { n: "more", ml: 14, s: 12 },
];

const TrayIcon = ({ k }: { k: string }) => {
  const art: Record<string, React.ReactNode> = {
    kb: (<><rect x="2" y="6" width="13" height="9" rx="1.5" fill="#c8ccd0" stroke="#777" /><path d="M4 9h9M4 12h9" stroke="#666" strokeDasharray="1 1" /><path d="M8 6c0-3 4-1 5-4" stroke="#ddd" fill="none" /></>),
    q: (<><circle cx="8" cy="8" r="7" fill="#1c4fa0" stroke="#dfe8f4" /><text x="8" y="12" textAnchor="middle" fontSize="11" fill="#fff" fontFamily="Liberation Sans">?</text></>),
    up: (<><rect x="5" y="1" width="7" height="7" fill="none" stroke="#fff" /><rect x="3" y="3" width="7" height="6" fill="#2470b0" stroke="#fff" /><path d="M5 13h6l-3 3z" fill="#fff" /></>),
    e: (<><circle cx="8" cy="8" r="7" fill="#63c24a" stroke="#e8f6e0" /><path d="M4.5 8h7a3.5 3.5 0 10-1 2.6" stroke="#fff" strokeWidth="1.5" fill="none" /></>),
    usb: (<><rect x="3" y="1" width="6" height="12" fill="#777" stroke="#ddd" /><circle cx="11" cy="11" r="4.5" fill="#2a8a3a" /><path d="M9 11l1.5 1.5L13 9.5" stroke="#fff" fill="none" /></>),
    sp: (<><path d="M2 6h3l5-4v12l-5-4H2z" fill="#d94e32" stroke="#eee" strokeWidth=".5" /><path d="M12 5a4 4 0 010 6" stroke="#eee" fill="none" /></>),
    plus: (<><circle cx="8" cy="8" r="7.5" fill="#7bb82a" /><circle cx="8" cy="8" r="5" fill="#f3d720" /><path d="M8 4.5v7M4.5 8h7" stroke="#2a5a10" strokeWidth="2" /></>),
    or: (<><rect x="1" y="1" width="14" height="14" rx="2" fill="#f0a41c" /><path d="M4 11a3 3 0 014-4l2 2a2.5 2.5 0 003-2" stroke="#fff" strokeWidth="1.5" fill="none" /></>),
    bl: (<><rect x="1" y="1" width="14" height="14" fill="#fff" /><path d="M3 9l5-6 5 6-3 0-2-2.5L6 9z" fill="#2a70d0" /><rect x="4" y="10" width="8" height="4" fill="#ef8a2a" /></>),
    g: (<path d="M12 3.5A5.5 5.5 0 108 13.5c3 0 4.5-2 4.5-4.5H8" stroke="#38a4ef" strokeWidth="2.6" fill="none" />),
    sig: (<path d="M2 14h2v-2H2zM5 14h2V9.5H5zM8 14h2V6.5H8zM11 14h2V3h-2z" fill="#f0f6fb" />),
    vol: (<><path d="M2 6h2.5L8 2.5v11L4.500 10H2z" fill="#f0f6fb" /><path d="M10 5a4 4 0 010 6M12 3a6.5 6.5 0 010 10" stroke="#f0f6fb" fill="none" /></>),
  };
  return <svg viewBox="0 0 16 16" width="17" height="17">{art[k]}</svg>;
};

export default function App() {
  return (
    <Page>
      <Global />
      <TitleRow>
        <Quick>
          <svg viewBox="0 0 20 20" width="20" height="20">
            <path d="M1 6L18 1l-.5 5-6 1.5V18l-4-2.5V8.500L2 10z" fill="#2b8ae6" />
          </svg>
          {Quicks.map((q, i) => (
            <QuickSlot key={i} $ml={q.ml} $w={q.w}>
              {q.caret ? <Caret $ml={0} $dim={q.dim} /> : <Icon n={q.n!} s={q.s ?? 17} dim={q.dim} />}
            </QuickSlot>
          ))}
        </Quick>
        <AppTitle>广联达BIM土建计量平台 GTJ2025 - [C:\Users\Administrator\Desktop\图形文件\焦炉工程-1.GTJ]</AppTitle>
        <WinControls>
          <WinBtn><Minimize /></WinBtn>
          <WinBtn>
            <svg viewBox="0 0 12 12" width="12" height="12">
              <path d="M3.5 3V1h7v6H8M1.5 3.5h6.5v7H1.5z" fill="none" stroke="#555" strokeWidth="1.2" />
            </svg>
          </WinBtn>
          <WinBtn><Icon n="close" s={12} /></WinBtn>
        </WinControls>
      </TitleRow>

      <MenuRow>
        {["开始", "工程设置", "建模", "工程量", "视图", "工具", "云应用", "算量协作", "智能提量", "IGMS"].map((t) => (
          <MenuTab key={t} $on={t === "建模"}>{t}</MenuTab>
        ))}
        <MenuRight>
          <HelpSearch>
            <span>楼层三维显示图元/轴网有错位，位置不对应如何处理？</span>
            <svg viewBox="0 0 12 12" width="12" height="12">
              <circle cx="5" cy="5" r="3.8" fill="none" stroke="#aaa" strokeWidth="1.2" />
              <path d="M8 8l3 3" stroke="#aaa" strokeWidth="1.2" />
            </svg>
          </HelpSearch>
          <Avatar>
            <svg viewBox="0 0 16 16" width="16" height="16">
              <circle cx="8" cy="6" r="4" fill="#fff" />
              <path d="M1 16c1-4 4-5 7-5s6 1 7 5z" fill="#fff" />
            </svg>
          </Avatar>
          <UserName>杨华</UserName>
          <TopTool><Icon n="headset" /></TopTool>
          <TopTool $ml={7}>
            <svg viewBox="0 0 16 16" width="16" height="17">
              <rect x="1" y="1" width="14" height="14" rx="2" fill="#e02b2b" />
              <path d="M1 5h14" stroke="#fff" />
              <path d="M4 9h2M7 9h2M10 9h2M4 12h2M7 12h2" stroke="#fff" />
            </svg>
          </TopTool>
          <TopTool $ml={5} $w={20}>?<Caret $ml={1} /></TopTool>
          <TopTool $ml={7}><Icon n="shirt" /></TopTool>
          <TopTool $ml={7}><Icon n="chevUp" /></TopTool>
        </MenuRight>
      </MenuRow>

      <Ribbon>
        <Group $w={234} $pl={1}>
          <GroupBody>
            <BigBtn $w={52}>
              <BigIconWrap>
                <svg viewBox="0 0 24 30" width="24" height="30">
                  <path d="M4 3l16 17L4 26z" fill="#cfe3fa" stroke="#2b7fe0" strokeWidth="2" />
                </svg>
              </BigIconWrap>
              <BigLabel>选择</BigLabel>
            </BigBtn>
            <Col $w={99}>
              <Item n="pick" t="拾取构件" />
              <Item n="batch" t="批量选择" />
              <Item n="attr" t="按属性选择" caret />
            </Col>
            <Col>
              <Item n="find" t="查找图元" />
              <Item n="filter" t="过滤图元" dim />
            </Col>
          </GroupBody>
          <GroupLabel>选择</GroupLabel>
        </Group>
        <Group $w={202} $pl={8}>
          <GroupBody>
            <Col $w={80}>
              <Item n="scale" t="设置比例" dim />
              <Item n="replace" t="查找替换" dim />
              <Item n="restore" t="还原CAD" dim />
            </Col>
            <Col>
              <Item n="floor" t="识别楼层表" dim />
              <Item n="cad" t="CAD识别选项" caret />
            </Col>
          </GroupBody>
          <GroupLabel>图纸操作<Caret $ml={8} /></GroupLabel>
        </Group>
        <Group $w={276} $pl={9}>
          <GroupBody>
            <Col $w={67}>
              <Item n="define" t="定义" />
              <Item n="cloud" t="云检查" />
              <Item n="lock" t="锁定" caret />
            </Col>
            <Col $w={112}>
              <Item n="copyto" t="复制到其它层" caret />
              <Item n="alignTop" t="自动平齐顶板" dim caret />
              <Item n="disk" t="图元存盘" caret />
            </Col>
            <Col>
              <Item n="twoPt" t="两点辅轴" caret />
              <Item n="dimen" t="长度标注" caret />
              <Item n="convert" t="转换图元" />
            </Col>
          </GroupBody>
          <GroupLabel>通用操作<Caret $ml={8} /></GroupLabel>
        </Group>
        <Group $w={238} $pl={10}>
          <GroupBody>
            <Col $w={54}>
              <Item n="trash" t="删除" />
              <Item n="copyFill" t="复制" />
              <Item n="move" t="移动" />
            </Col>
            <Col $w={53}>
              <Item n="rotate" t="旋转" />
              <Item n="mirror" t="镜像" />
              <Item n="extend" t="延伸" dim />
            </Col>
            <Col $w={64}>
              <Item n="trim" t="修剪" dim />
              <Item n="align" t="对齐" dim caret />
              <Item n="breakIt" t="打断" dim />
            </Col>
            <Col>
              <Item n="offset" t="偏移" />
              <Item n="merge" t="合并" dim />
              <Item n="split" t="分割" dim />
            </Col>
          </GroupBody>
          <GroupLabel>修改<Caret $ml={8} /></GroupLabel>
        </Group>
        <Group $w={69} $pl={7}>
          <GroupBody>
            <Col $w={33}>
              <RItem><Icon n="point" dim /></RItem>
              <RItem><Icon n="line" dim /></RItem>
              <RItem $dim><Icon n="arc" dim /><Caret $dim $ml={0} /></RItem>
            </Col>
            <Col>
              <RItem><Icon n="gauge" dim /></RItem>
              <RItem><Icon n="rect" dim /></RItem>
            </Col>
          </GroupBody>
          <GroupLabel>绘图</GroupLabel>
        </Group>
        <Group $w={176} $pl={3}>
          <GroupBody>
            <BigBtn $w={82} $dim>
              <BigIconWrap><BigGlyph kind="scan" dim /></BigIconWrap>
              <BigLabel>识别筏板主筋</BigLabel>
            </BigBtn>
            <BigBtn $w={82} $dim>
              <BigIconWrap><BigGlyph kind="check" dim /></BigIconWrap>
              <BigLabel>校核筏板钢筋</BigLabel>
            </BigBtn>
          </GroupBody>
          <GroupLabel>识别筏板主筋</GroupLabel>
        </Group>
        <Group $w={286} $pl={5}>
          <GroupBody>
            <BigBtn $w={68} $on>
              <BigIconWrap><BigGlyph kind="place" /></BigIconWrap>
              <BigLabel>布置受力筋</BigLabel>
            </BigBtn>
            <Col $w={107} $pl={5}>
              <Item n="swap" t="交换标注" />
              <Item n="edit" t="查改标注" />
              <Item n="range" t="查看布筋范围" />
            </Col>
            <Col>
              <Item n="hatch" t="查看布筋情况" />
              <Item n="copyBar" t="复制钢筋" />
              <Item n="sameName" t="应用同名板" />
            </Col>
          </GroupBody>
          <GroupLabel>筏板主筋二次编辑</GroupLabel>
        </Group>
      </Ribbon>

      <PropBar>
        {["焦炉工程", "基础层", "基础", "筏板主筋", "C22-200", "分层筏板1"].map((t) => (
          <Drop key={t}>{t}<Caret /></Drop>
        ))}
        <RadioRow $ml={11}>
          {[["单板", true], ["多板"], ["自定义"], ["按受力筋范围"]].map(([t, on]) => (
            <RadioItem key={t as string}><RadioMark $on={!!on} />{t}</RadioItem>
          ))}
          <BarDivider />
          {[["XY 方向"], ["水平", true], ["垂直"], ["两点"], ["平行边"], ["弧线边布置放射筋"], ["圆心布置放射筋"]].map(([t, on]) => (
            <RadioItem key={t as string}><RadioMark $on={!!on} />{t}</RadioItem>
          ))}
        </RadioRow>
      </PropBar>

      <Main>
        <Nav>
          <NavHead><GripDots /><span>导航栏</span><Cross /></NavHead>
          <NavTop />
          {NAV_A.map((t) => <NavLeaf key={t}>{t}</NavLeaf>)}
          <NavCat><CatIcon k="zx" />装修</NavCat>
          <NavCat><CatIcon k="jk" />基坑支护</NavCat>
          <NavCat><CatIcon k="tf" />土方</NavCat>
          <NavCat $on><CatIcon k="jc" />基础</NavCat>
          {NAV_B.map((t) => <NavLeaf key={t} $on={t === "筏板主筋(R)"}>{t}</NavLeaf>)}
          <NavCat><CatIcon k="qt" />其它</NavCat>
          <NavCat><CatIcon k="zd" />自定义</NavCat>
          <NavLeaf>自定义节点(ZJ)</NavLeaf>
          <NavThumb />
        </Nav>

        <Mid>
          <MidPane $h={296}>
            <MidHead>
              <MidGrip><GripDots /></MidGrip>
              <HeadTab $on>构件列表</HeadTab>
              <HeadTab>图纸管理</HeadTab>
              <Cross />
            </MidHead>
            <ListTools>
              <SplitTool>
                <ToolSquare><Icon n="newDoc" s={18} /></ToolSquare>
                <ToolSquare $w={12}><Caret $ml={0} /></ToolSquare>
              </SplitTool>
              <ToolSquare><Icon n="copyFill" s={18} /></ToolSquare>
              <ToolSquare><Icon n="trash" s={18} /></ToolSquare>
              <ToolSquare><Icon n="copyStack" s={18} /></ToolSquare>
              <ToolSquare><Icon n="saveList" s={18} /></ToolSquare>
              <ToolSquare><Icon n="editList" s={18} /></ToolSquare>
              <ToolPush $w={22}>▸▸</ToolPush>
            </ListTools>
            <SearchPill>搜索构件...</SearchPill>
            <PartList>
              {PARTS.map((t, i) => <PartRow key={t} $on={i === 0}>{t}</PartRow>)}
            </PartList>
          </MidPane>
          <MidPane>
            <MidHead>
              <MidGrip><GripDots /></MidGrip>
              <HeadTab $on>属性列表</HeadTab>
              <HeadTab>图层管理</HeadTab>
              <Cross />
            </MidHead>
            <AttrHead>
              <AttrHeadCell>属性名称</AttrHeadCell>
              <AttrHeadCell $b>属性值</AttrHeadCell>
              <AttrHeadCell />
            </AttrHead>
            <AttrGroup><Tri $open />基础属性</AttrGroup>
            {[["名称", "C22-200", 1], ["类别", "底筋"], ["钢筋信息", "C22@200", 1], ["备注", ""]].map(([n, v, l]) => (
              <AttrRow key={n as string}><AttrName $link={!!l}>{n}</AttrName><AttrValue>{v}</AttrValue></AttrRow>
            ))}
            <AttrGroup><Tri $open />钢筋业务属性</AttrGroup>
            {[["钢筋锚固", "(35)"], ["钢筋搭接", "(49)"], ["归类名称", "(C22-200)"], ["汇总信息", "(筏板主筋)"], ["计算设置", "按默认计算设置计算"]].map(([n, v]) => (
              <AttrRow key={n}><AttrName>{n}</AttrName><AttrValue>{v}</AttrValue></AttrRow>
            ))}
            <AttrRow>
              <AttrName>节点设置</AttrName>
              <AttrValue $focus>按默认节点设置计算<DotsBtn><i /><i /><i /></DotsBtn></AttrValue>
            </AttrRow>
            <AttrRow><AttrName>搭接设置</AttrName><AttrValue>按默认搭接设置计算</AttrValue></AttrRow>
            <AttrRow><AttrName>长度调整(mm)</AttrName><AttrValue /><AttrDot /></AttrRow>
            <AttrGroup><Tri />显示样式</AttrGroup>
          </MidPane>
        </Mid>

        <Canvas>
          <AxisMark viewBox="591 910 60 60" width="60" height="60">
            <path d="M600.5 958V932" stroke="#00d000" strokeWidth="2" />
            <path d="M600.5 926l4 13h-8z" fill="#00d000" />
            <text x="598" y="925" fontSize="12" fill="#00ff00" fontFamily="Liberation Sans">Y</text>
            <path d="M600 958.5h22" stroke="#e00000" strokeWidth="2" />
            <path d="M632 958.5l-13 4v-8z" fill="#e00000" />
            <text x="634" y="963" fontSize="12" fill="#ff2020" fontFamily="Liberation Sans">X</text>
            <circle cx="600.5" cy="958.5" r="3.5" fill="#2233cc" />
          </AxisMark>
          <FloatTools>
            <svg viewBox="0 0 22 22" width="22" height="22">
              <ellipse cx="11" cy="11" rx="8" ry="9" fill="none" stroke="#666" strokeWidth="1.2" transform="rotate(30 11 11)" />
              <path d="M2 14C6 14 16 8 21 3" fill="none" stroke="#4488dd" strokeWidth="1.2" />
            </svg>
            <svg viewBox="0 0 22 22" width="20" height="22">
              <path d="M3 7l5-5h11v14l-5 5H3zM3 7h11v14M14 7l5-5" fill="none" stroke="#666" />
            </svg>
          </FloatTools>
        </Canvas>

        <SidePanel>
          <SideHead><GripDots /><span>显示设置</span><Cross /></SideHead>
          <SideTabs>
            <SideTab $on>图元显示</SideTab>
            <SideTab>楼层显示</SideTab>
          </SideTabs>
          <LayerTable>
            <LayerRow><LayerName $top>图层构件</LayerName><LayerCell>显示图元</LayerCell><LayerCell>显示名称</LayerCell></LayerRow>
            {LAYER_HIDDEN.map((t, i) => (
              <LayerRow key={t + i}><LayerName $top>{t}</LayerName><LayerCell><Check /></LayerCell><LayerCell><Check /></LayerCell></LayerRow>
            ))}
            <LayerRow><LayerName $top><FoldBox />门窗洞</LayerName><LayerCell><Check /></LayerCell><LayerCell><Check /></LayerCell></LayerRow>
            {LAYER_SHOWN.map((t) => (
              <LayerRow key={t}><LayerName>{t}</LayerName><LayerCell><Check /></LayerCell><LayerCell><Check /></LayerCell></LayerRow>
            ))}
          </LayerTable>
          <SideFoot><OutlineBtn $w={90}>恢复默认设置</OutlineBtn></SideFoot>
        </SidePanel>
      </Main>

      <Status>
        <StatusText $w={92}>层高： 1.5</StatusText>
        <StatusText $w={139}>标高： -4~-2.5</StatusText>
        <StatusText $w={111}>选中图元：0</StatusText>
        <StatusText $w={110}>隐藏图元：0</StatusText>
        <StatusBtn $w={24} $ml={0}><Icon n="corner" s={14} /></StatusBtn>
        <StatusBtn $w={36} $on><Icon n="cornerSel" s={15} /><Caret $ml={0} /></StatusBtn>
        <StatusBtn $w={25} $ml={6}><Icon n="cross" s={15} dim /></StatusBtn>
        <StatusBtn $w={35} $ml={6}><Icon n="angle" s={15} /><Caret $ml={0} /></StatusBtn>
        <StatusBtn $w={36}><Icon n="plusBar" s={15} /><Caret $ml={0} /></StatusBtn>
        <StatusBtn $w={24}><Icon n="phone" s={15} /></StatusBtn>
        <StatusBtn $w={23}><Icon n="curve" s={15} /></StatusBtn>
        <Hint $ml={16}><Icon n="expand" s={16} /></Hint>
        <Hint>在此设置筏板主筋的节点构造类型</Hint>
        <HintRight>
          <Badge $c="#f09030">!</Badge>
          <span>合法性检查存在问题，请点击查看</span>
          <Badge $c="#7ab800" $ml={9}>✓</Badge>
          <span>实时计算已完成</span>
        </HintRight>
      </Status>

      <Taskbar>
        <Orb>
          <svg viewBox="0 0 38 38" width="38" height="38">
            <defs>
              <radialGradient id="orb" cx="50%" cy="35%" r="60%">
                <stop offset="0" stopColor="#7ec8ee" />
                <stop offset="1" stopColor="#10384f" />
              </radialGradient>
            </defs>
            <circle cx="19" cy="19" r="18" fill="url(#orb)" stroke="#c8e4f4" strokeOpacity=".6" />
            <path d="M10 12c3-2 6-1 8.5 0l-1.5 6.5c-3-1-5-1.5-8.5 0z" fill="#e84a26" />
            <path d="M19.5 12.5c3 1 5.5 1 8.5-.5l-1.5 6.5c-3 1.5-5.5 1-8.5 0z" fill="#7ab82e" />
            <path d="M8 20c3-1.5 5.5-1 8.5 0L15 26.5c-3-1-5-1.5-8.5 0z" fill="#2a8ae0" />
            <path d="M17.5 20.5c3 1 5.5 1 8.5-.5l-1.5 6.5c-3 1.5-5.5 1-8.5 0z" fill="#f5c020" />
          </svg>
        </Orb>
        <TaskGrip>
          <svg viewBox="0 0 8 32" width="8" height="32">
            {[2, 6, 10, 14, 18, 22, 26, 30].map((y) => (
              <g key={y}>
                <rect x="0" y={y} width="2" height="2" fill="#1c3f58" />
                <rect x="4" y={y} width="2" height="2" fill="#1c3f58" />
              </g>
            ))}
          </svg>
        </TaskGrip>
        <TaskBtns>
          <TaskBtn>
            <svg viewBox="0 0 32 34" width="30" height="32">
              <path d="M26 5C18 0 5 4 3 15c-2 11 6 17 14 16 9-1 12-9 9-14-7-3-11-1-12 2 4-1 7 0 7 3 0 4-5 5-8 3-5-3-4-11 0-14 4-3 9-3 13-6z" fill="#2a8cf0" stroke="#bfe0ff" />
            </svg>
          </TaskBtn>
          <TaskBtn>
            <svg viewBox="0 0 32 32" width="32" height="32">
              <rect x="1" y="1" width="30" height="30" rx="5" fill="#2a78f0" />
              <path d="M7 11L25 6l-.5 6-6 1.5V26l-4-2.500V14.5L8 16z" fill="#fff" />
            </svg>
          </TaskBtn>
          <TaskBtn>
            <svg viewBox="0 0 32 32" width="30" height="30">
              <circle cx="16" cy="16" r="14" fill="#fff" stroke="#7cc83a" strokeWidth="3" />
              <path d="M8 17h16c0-6-3-9-8-9s-8 4-8 9 4 8 8 8c3 0 5-1 7-3" stroke="#4aaa20" strokeWidth="3.5" fill="none" />
              <path d="M2 22c6 6 22-2 28-16" stroke="#5ab828" strokeWidth="2" fill="none" />
            </svg>
          </TaskBtn>
        </TaskBtns>
        <Tray>
          <TaskGrip>
            <svg viewBox="0 0 8 32" width="8" height="32">
              {[2, 6, 10, 14, 18, 22, 26, 30].map((y) => (
                <g key={y}>
                  <rect x="0" y={y} width="2" height="2" fill="#12304a" />
                  <rect x="4" y={y} width="2" height="2" fill="#12304a" />
                </g>
              ))}
            </svg>
          </TaskGrip>
          {["kb", "q", "up", "e", "usb", "sp", "plus", "or", "bl", "g", "sig", "vol"].map((k) => (
            <TraySlot key={k}><TrayIcon k={k} /></TraySlot>
          ))}
          <Clock>15:57<br />2024/8/27</Clock>
          <DesktopBox />
          <ShowDesk />
        </Tray>
      </Taskbar>

      {/* 节点设置 dialog */}
      <Dialog $l={480} $t={267} $w={800} $h={534}>
        <DialogHead $h={41}>节点设置</DialogHead>
        <SetFrame>
          <SetTableWrap>
            <SetRow $h={18}>
              <HeadCell />
              <HeadCell>名称</HeadCell>
              <HeadCell $on>节点图</HeadCell>
            </SetRow>
            {SETTINGS.map(([n, v, d], i) => (
              <SetRow key={n} $h={21}>
                <IdxCell $on={i === 0}>{i + 1}</IdxCell>
                <NameCell $dim={d}>{n}</NameCell>
                <NodeCell $dim={d} $on={i === 0}>
                  {v}
                  {i === 0 && <DotsBtn><i /><i /><i /></DotsBtn>}
                </NodeCell>
              </SetRow>
            ))}
          </SetTableWrap>
          <PreviewPane>
            <PreviewCap>节点设置示意图</PreviewCap>
            <PreviewArt />
            <PreviewNote>
              规范算法：来源22G101-3第2-33页和2-37页。筏板面筋伸到端部弯折，弯折长度<br />12*d。
            </PreviewNote>
          </PreviewPane>
        </SetFrame>
      </Dialog>

      {/* 选择节点构造图 dialog */}
      <Dialog $l={1250} $t={247} $w={660} $h={596}>
        <DialogHead $h={39}>
          选择节点构造图
          <svg viewBox="0 0 12 12" width="12" height="12">
            <path d="M1 1l10 10M11 1L1 11" stroke="#777" strokeWidth="1" fill="none" />
          </svg>
        </DialogHead>
        <PickFrame>
          <PickArea>
            <ThumbOne />
            <ThumbTwo />
          </PickArea>
          <PickScroll>
            <ScrollArrow />
            <ScrollArrow $down />
          </PickScroll>
        </PickFrame>
        <PickNote>规范算法：来源22G101-3第2-37页。筏板面筋伸到端部弯折，与底筋搭接 150。</PickNote>
        <DialogFoot>
          <PrimaryBtn>确定</PrimaryBtn>
          <OutlineBtn $w={80}>取消</OutlineBtn>
        </DialogFoot>
        <ResizeGrip viewBox="0 0 8 8" width="8" height="8">
          <path d="M6 0h2v2H6zM3 3h2v2H3zM6 3h2v2H6zM0 6h2v2H0zM3 6h2v2H3zM6 6h2v2H6z" fill="#888" />
        </ResizeGrip>
      </Dialog>
    </Page>
  );
}
